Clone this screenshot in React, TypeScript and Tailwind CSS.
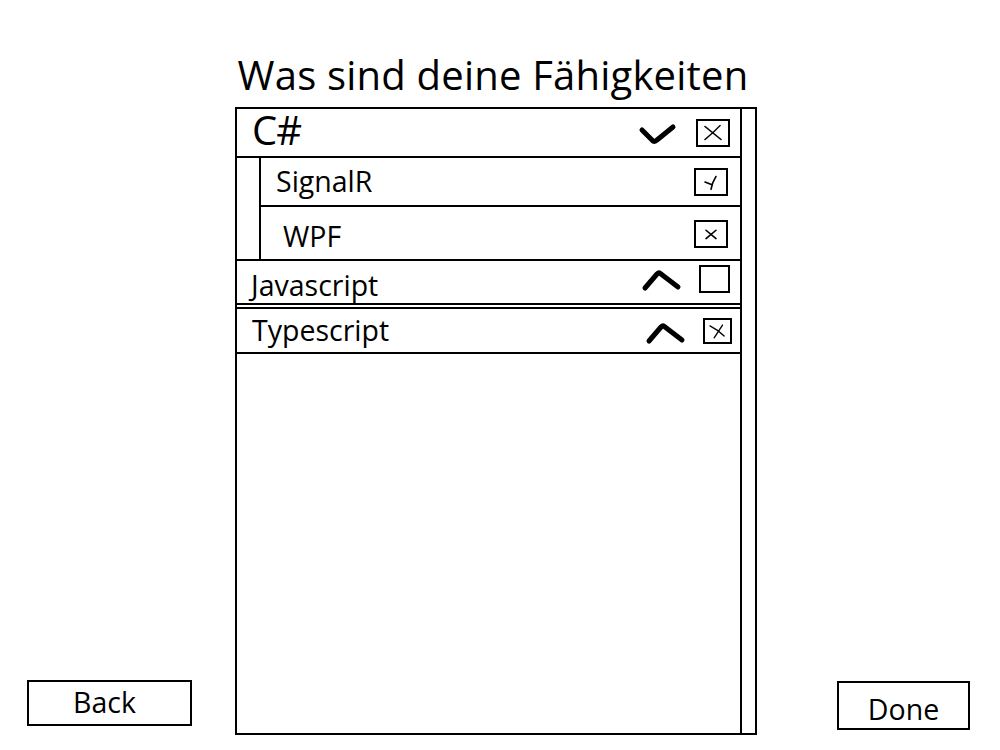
import React from "react";

const font = { fontFamily: '"Open Sans", "Noto Sans", sans-serif' };

function ChevronDown() {
  return (
    <svg width="40" height="26" viewBox="0 0 40 26" className="block">
      <path d="M4 8 L15 19 Q17 20 19 18 L35 5" fill="none" stroke="#000" strokeWidth="5" strokeLinecap="round" strokeLinejoin="round" />
    </svg>
  );
}

function ChevronUp() {
  return (
    <svg width="42" height="26" viewBox="0 0 42 26" className="block">
      <path d="M4 21 L16 7 Q18 5 20 7 L37 20" fill="none" stroke="#000" strokeWidth="5" strokeLinecap="round" strokeLinejoin="round" />
    </svg>
  );
}

function Box({ mark, size = 32, h = 28 }: { mark?: "x" | "sx" | "check" | "tx"; size?: number; h?: number }) {
  return (
    <div className="border-2 border-black bg-white relative" style={{ width: size, height: h }}>
      {mark && (
        <svg className="absolute inset-0" width="100%" height="100%" viewBox="0 0 30 26" preserveAspectRatio="none">
          {mark === "x" && (
            <>
              <path d="M7 6 Q15 13 23 20" stroke="#000" strokeWidth="1.6" fill="none" strokeLinecap="round" />
              <path d="M22 5 Q15 13 7 20" stroke="#000" strokeWidth="1.6" fill="none" strokeLinecap="round" />
            </>
          )}
          {mark === "sx" && (
            <>
              <path d="M10 9 L20 18" stroke="#000" strokeWidth="1.6" fill="none" strokeLinecap="round" />
              <path d="M20 9 L10 18" stroke="#000" strokeWidth="1.6" fill="none" strokeLinecap="round" />
            </>
          )}
          {mark === "check" && (
            <>
              <path d="M9 13 L16 16" stroke="#000" strokeWidth="1.6" fill="none" strokeLinecap="round" />
              <path d="M20 7 Q16 14 15 21" stroke="#000" strokeWidth="1.6" fill="none" strokeLinecap="round" />
            </>
          )}
          {mark === "tx" && (
            <>
              <path d="M6 7 Q16 12 23 19" stroke="#000" strokeWidth="1.6" fill="none" strokeLinecap="round" />
              <path d="M21 6 L11 21" stroke="#000" strokeWidth="1.6" fill="none" strokeLinecap="round" />
            </>
          )}
        </svg>
      )}
    </div>
  );
}

export default function App() {
  return (
    <div className="w-[1000px] h-[750px] bg-white text-black flex flex-col" style={font}>
      <h1 className="text-[40px] leading-[48px] text-center pt-[51px] tracking-[0.2px] mr-[14px]">
        Was sind deine Fähigkeiten
      </h1>
      <div className="flex items-end mt-[8px]">
        <button className="ml-[27px] mb-[9px] w-[165px] h-[46px] border-2 border-black flex items-center justify-center text-[28.5px] leading-none pb-[2px] pr-[10px]">
          Back
        </button>
        <div className="ml-[43px] w-[522px] h-[628px] border-2 border-black flex">
          <div className="flex-1 flex flex-col">
            {/* C# row */}
            <div className="h-[49px] border-b-2 border-black flex items-center pl-[15px] pr-[10px]">
              <span className="text-[40px] leading-none -mt-[6px] tracking-[-1px]">C#</span>
              <div className="ml-auto mr-[18px] mt-[4px]">
                <ChevronDown />
              </div>
              <Box mark="x" size={34} h={28} />
            </div>
            {/* Sub items */}
            <div className="pl-[22px]">
              <div className="border-l-2 border-black">
                <div className="h-[49px] border-b-2 border-black flex items-center pl-[15px] pr-[12px]">
                  <span className="text-[28.5px] leading-none">SignalR</span>
                  <div className="ml-auto">
                    <Box mark="check" size={34} h={28} />
                  </div>
                </div>
                <div className="h-[52px] flex items-center pl-[22px] pr-[12px]">
                  <span className="text-[28.5px] leading-none pt-[6px]">WPF</span>
                  <div className="ml-auto mt-[2px]">
                    <Box mark="sx" size={34} h={28} />
                  </div>
                </div>
              </div>
            </div>
            {/* Javascript */}
            <div className="h-[46px] border-y-2 border-black flex items-center pl-[14px] pr-[10px]">
              <span className="text-[28.5px] leading-none pt-[6px]">Javascript</span>
              <div className="ml-auto mr-[16px] mt-[-4px]">
                <ChevronUp />
              </div>
              <div className="mt-[-6px]">
                <Box size={31} h={28} />
              </div>
            </div>
            <div className="h-[2px]" />
            {/* Typescript */}
            <div className="h-[47px] border-y-2 border-black flex items-center pl-[15px] pr-[8px]">
              <span className="text-[28.5px] leading-none">Typescript</span>
              <div className="ml-auto mr-[16px] mt-[4px]">
                <ChevronUp />
              </div>
              <Box mark="tx" size={29} h={26} />
            </div>
          </div>
          <div className="w-[15px] border-l-2 border-black" />
        </div>
        <button className="ml-[80px] mb-[5px] w-[133px] h-[49px] border-2 border-black flex items-center justify-center text-[28.5px] leading-none pt-[8px]">
          Done
        </button>
      </div>
    </div>
  );
}
